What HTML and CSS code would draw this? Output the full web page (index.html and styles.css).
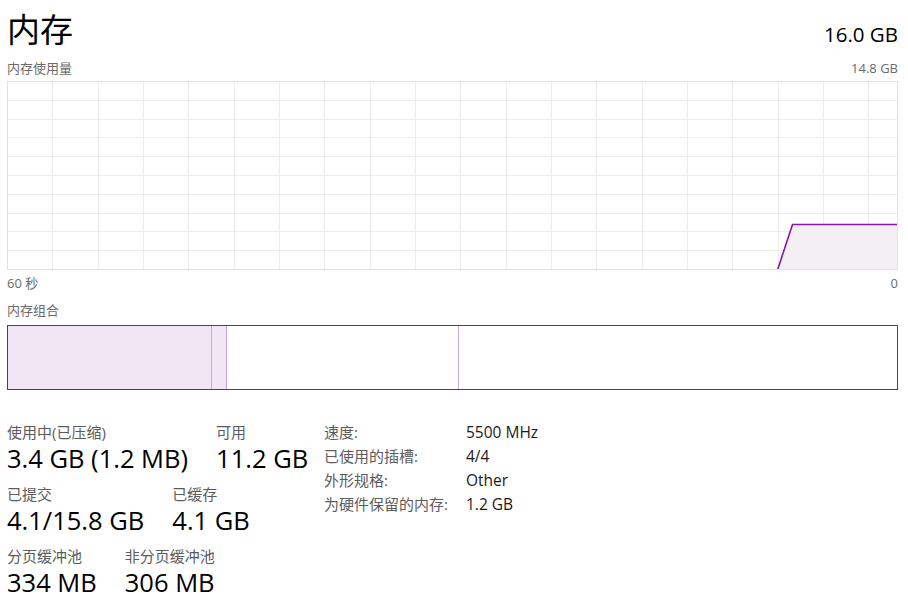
FILE: index.html
```html
<!DOCTYPE html>
<html lang="zh-CN">
  <head>
    <meta charset="UTF-8" />
    <title>内存</title>
    <link rel="stylesheet" href="styles.css">
  </head>
  <body>
    <div class="page">
      <!-- Header -->
      <div class="title-row">
        <h1>内存</h1>
        <span class="total">16.0 GB</span>
      </div>
      <div class="caption-row">
        <span>内存使用量</span>
        <span>14.8 GB</span>
      </div>

      <!-- Usage graph -->
      <div class="graph">
        <svg width="891" height="189" viewBox="0 0 891 189">
          <path class="grid" d="M45.5 0V189M91.5 0V189M136.5 0V189M181.5 0V189M227.5 0V189M272.5 0V189M317.5 0V189M363.5 0V189M408.5 0V189M453.5 0V189M499.5 0V189M544.5 0V189M589.5 0V189M635.5 0V189M680.5 0V189M725.5 0V189M771.5 0V189M816.5 0V189M861.5 0V189M0 19.5H891M0 38.5H891M0 56.5H891M0 75.5H891M0 94.5H891M0 113.5H891M0 132.5H891M0 150.5H891M0 169.5H891" />
          <polygon class="area" points="770.7,188 785.5,143.5 891,143.5 891,188" />
          <polyline class="line" points="770.7,188.5 785.5,143.5 891,143.5" />
          <rect class="frame" x="0.5" y="0.5" width="890" height="188" />
        </svg>
      </div>
      <div class="caption-row axis">
        <span>60 秒</span>
        <span>0</span>
      </div>

      <!-- Composition bar -->
      <div class="caption-row section">
        <span>内存组合</span>
      </div>
      <div class="bar">
        <div class="seg in-use"></div>
        <div class="seg modified"></div>
        <div class="seg standby"></div>
        <div class="seg free"></div>
      </div>

      <!-- Stats -->
      <div class="stats">
        <div class="stat-list">
          <div class="stat-row">
            <div class="stat">
              <div class="label">使用中(已压缩)</div>
              <div class="value">3.4 GB (1.2 MB)</div>
            </div>
            <div class="stat">
              <div class="label">可用</div>
              <div class="value">11.2 GB</div>
            </div>
          </div>
          <div class="stat-row">
            <div class="stat">
              <div class="label">已提交</div>
              <div class="value">4.1/15.8 GB</div>
            </div>
            <div class="stat">
              <div class="label">已缓存</div>
              <div class="value">4.1 GB</div>
            </div>
          </div>
          <div class="stat-row">
            <div class="stat">
              <div class="label">分页缓冲池</div>
              <div class="value">334 MB</div>
            </div>
            <div class="stat">
              <div class="label">非分页缓冲池</div>
              <div class="value">306 MB</div>
            </div>
          </div>
        </div>

        <div class="details">
          <span class="key">速度:</span><span class="val">5500 MHz</span>
          <span class="key">已使用的插槽:</span><span class="val">4/4</span>
          <span class="key">外形规格:</span><span class="val">Other</span>
          <span class="key">为硬件保留的内存:</span><span class="val">1.2 GB</span>
        </div>
      </div>
    </div>
  </body>
</html>
```

FILE: styles.css
```css
body {
  margin: 0;
  background: #fff;
  color: #1a1a1a;
  font-family: "Open Sans", "Noto Sans CJK SC", sans-serif;
}

.page {
  padding: 0 10px 0 7px;
}

.title-row {
  display: flex;
  justify-content: space-between;
  align-items: baseline;
  height: 60px;
}

.title-row h1 {
  margin: 0;
  font-size: 33px;
  font-weight: normal;
  line-height: 60px;
  color: #000;
}

.total {
  font-size: 20.5px;
  color: #000;
}

.caption-row {
  display: flex;
  justify-content: space-between;
  font-size: 13px;
  line-height: 16px;
  color: #6b6b6b;
}

.caption-row.axis {
  margin-top: 5px;
}

.caption-row.section {
  margin-top: 11px;
}

.graph {
  margin-top: 5px;
  height: 189px;
}

.graph svg {
  display: block;
}

.grid {
  stroke: #ececec;
  stroke-width: 1;
  fill: none;
  shape-rendering: crispEdges;
}

.frame {
  stroke: #e2e2e2;
  fill: none;
  shape-rendering: crispEdges;
}

.area {
  fill: #f2eff5;
}

.line {
  stroke: #8b12ae;
  stroke-width: 1.6;
  fill: none;
}

.bar {
  display: flex;
  margin-top: 7px;
  height: 63px;
  border: 1px solid #8b12ae;
}

.seg {
  border-right: 1px solid #c8a8d8;
}

.in-use {
  width: 203px;
  background: #f0e5f3;
}

.modified {
  width: 14px;
  background: #f0e5f3;
}

.standby {
  width: 231px;
}

.free {
  flex: 1;
  border-right: none;
}

.stats {
  display: flex;
  align-items: flex-start;
  margin-top: 30px;
}

.stat-list {
  width: 317px;
  padding-top: 2px;
  display: flex;
  flex-direction: column;
  gap: 11px;
}

.stat-row {
  display: flex;
  gap: 28px;
}

.label {
  font-size: 15px;
  line-height: 20px;
  color: #5c5c5c;
}

.value {
  margin-top: 1px;
  font-size: 25.5px;
  line-height: 30px;
  color: #000;
}

.details {
  display: grid;
  grid-template-columns: 142px auto;
  grid-auto-rows: 24px;
  font-size: 15px;
  line-height: 24px;
}

.details .key {
  color: #5c5c5c;
}

.details .val {
  font-size: 15.5px;
  color: #1a1a1a;
}
```
